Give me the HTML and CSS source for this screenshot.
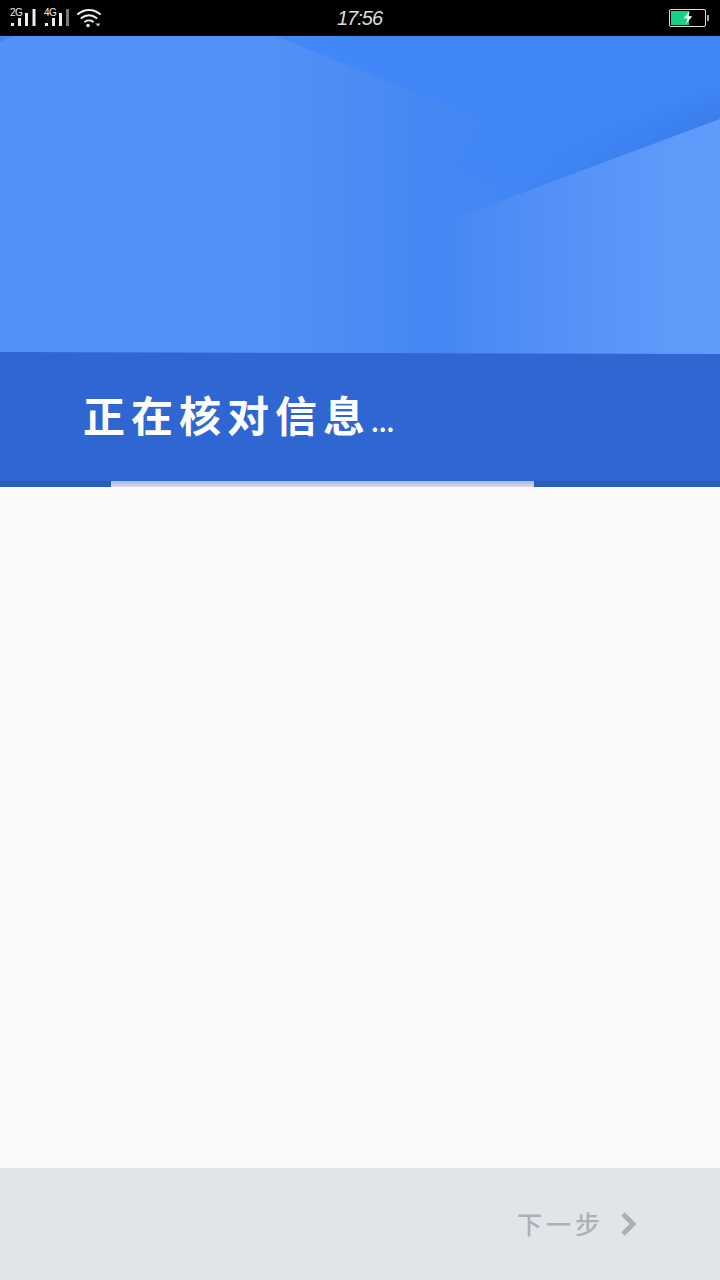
FILE: index.html
```html
<!DOCTYPE html>
<html lang="zh-CN">
<head>
    <meta charset="UTF-8">
    <meta name="viewport" content="width=device-width, initial-scale=1.0">
    <title>正在核对信息</title>
    <link rel="stylesheet" href="styles.css">
</head>
<body>
    <div class="container">
        <div class="status-bar">
            <div class="status-left">
                <div class="signal">
                    <span class="net">2G</span>
                    <svg class="bars" width="26" height="20" viewBox="0 0 26 20">
                        <rect x="1" y="15" width="3" height="3" fill="#eee"/>
                        <rect x="8" y="10" width="3" height="8" fill="#eee"/>
                        <rect x="15" y="5" width="3" height="13" fill="#eee"/>
                        <rect x="22.500" y="1" width="3" height="17" fill="#eee"/>
                    </svg>
                </div>
                <div class="signal">
                    <span class="net">4G</span>
                    <svg class="bars" width="26" height="20" viewBox="0 0 26 20">
                        <rect x="1" y="15" width="3" height="3" fill="#eee"/>
                        <rect x="8" y="10" width="3" height="8" fill="#eee"/>
                        <rect x="15" y="5" width="3" height="13" fill="#eee"/>
                        <rect x="22" y="1" width="3" height="17" fill="#777"/>
                    </svg>
                </div>
                <svg class="wifi" width="26" height="20" viewBox="0 0 26 20" fill="none" stroke="#eee" stroke-width="2" stroke-linecap="round">
                    <path d="M2 6C8.500 0.500 17.500 0.500 24 6"/>
                    <path d="M5.500 10C10 6.200 16 6.200 20.500 10"/>
                    <path d="M9 13.700C11.200 12 14.800 12 17 13.700"/>
                    <circle cx="12" cy="17.500" r="1.700" fill="#eee" stroke="none"/>
                    <path d="M19.500 15.500l2.500 3 2.500-3z" fill="#ccc" stroke="none"/>
                </svg>
            </div>
            <div class="clock">17:56</div>
            <div class="battery">
                <div class="battery-body">
                    <div class="battery-level"></div>
                    <svg class="bolt" width="10" height="13" viewBox="2 0 10 15">
                        <path d="M9 0L2 8.500h4.500L4.500 15 12 6H7.500z" fill="#fff"/>
                    </svg>
                </div>
                <div class="battery-tip"></div>
            </div>
        </div>

        <div class="hero">
            <svg class="hero-bg" width="720" height="318" viewBox="0 0 720 318">
                <defs>
                    <linearGradient id="base" gradientUnits="userSpaceOnUse" x1="260" y1="0" x2="425" y2="0">
                        <stop offset="0" stop-color="#5292f6"/>
                        <stop offset="1" stop-color="#4688f3"/>
                    </linearGradient>
                    <linearGradient id="upper" gradientUnits="userSpaceOnUse" x1="470" y1="60" x2="410" y2="180">
                        <stop offset="0" stop-color="#3f86f7"/>
                        <stop offset="1" stop-color="#3f86f7" stop-opacity="0"/>
                    </linearGradient>
                    <linearGradient id="lower" gradientUnits="userSpaceOnUse" x1="425" y1="0" x2="680" y2="0">
                        <stop offset="0" stop-color="#4688f3" stop-opacity="0"/>
                        <stop offset="0.1" stop-color="#4688f3"/>
                        <stop offset="0.55" stop-color="#5592f7"/>
                        <stop offset="1" stop-color="#5f9bfa"/>
                    </linearGradient>
                    <linearGradient id="shade" gradientUnits="userSpaceOnUse" x1="627" y1="80" x2="640" y2="113">
                        <stop offset="0" stop-color="#3878e2" stop-opacity="0"/>
                        <stop offset="1" stop-color="#3878e2"/>
                    </linearGradient>
                    <linearGradient id="shade-fade" gradientUnits="userSpaceOnUse" x1="500" y1="0" x2="720" y2="0">
                        <stop offset="0" stop-color="#000"/>
                        <stop offset="1" stop-color="#999"/>
                    </linearGradient>
                    <mask id="shade-mask" maskUnits="userSpaceOnUse" x="0" y="0" width="720" height="318">
                        <rect width="720" height="318" fill="url(#shade-fade)"/>
                    </mask>
                </defs>
                <rect width="720" height="318" fill="url(#base)"/>
                <polygon points="0,0 12,0 0,6" fill="#4285ef"/>
                <polygon points="275,0 720,0 720,83 410,199 480,82" fill="url(#upper)"/>
                <polygon points="720,83 720,46 500,131 410,199" fill="url(#shade)" mask="url(#shade-mask)"/>
                <polygon points="410,199 720,83 720,318 395,318" fill="url(#lower)"/>
            </svg>
        </div>

        <div class="band">
            <h1 class="title">正在核对信息<span class="dots">...</span></h1>
        </div>
        <div class="progress">
            <div class="progress-fill"></div>
        </div>

        <div class="content"></div>

        <div class="footer">
            <div class="next">
                <span class="next-label">下一步</span>
                <svg width="18" height="24" viewBox="0 0 18 24" fill="none" stroke="#acb0b4" stroke-width="5">
                    <path d="M3 2l10 10L3 22"/>
                </svg>
            </div>
        </div>
    </div>
</body>
</html>
```

FILE: styles.css
```css
* {
    box-sizing: border-box;
}
html, body {
    margin: 0;
    padding: 0;
}
body {
    background-color: #fafafa;
    font-family: "Noto Sans CJK SC", "Liberation Sans", sans-serif;
}
.container {
    display: flex;
    flex-direction: column;
    width: 720px;
    height: 1280px;
    overflow: hidden;
}
.status-bar {
    display: flex;
    align-items: center;
    flex: 0 0 36px;
    height: 36px;
    padding: 0 11px 0 10px;
    background-color: #000;
}
.status-left {
    display: flex;
    align-items: center;
    gap: 8px;
    flex: 0 0 327px;
}
.signal {
    position: relative;
    width: 26px;
    height: 20px;
}
.net {
    position: absolute;
    left: 0;
    top: 0;
    font-family: "Liberation Sans", sans-serif;
    font-size: 10px;
    line-height: 10px;
    letter-spacing: -0.5px;
    color: #eee;
}
.bars {
    display: block;
}
.wifi {
    margin-left: -2px;
}
.clock {
    font-family: "Liberation Sans", sans-serif;
    font-style: italic;
    font-size: 20px;
    line-height: 36px;
    letter-spacing: -1px;
    color: #ddd;
}
.battery {
    display: flex;
    align-items: center;
    gap: 1px;
    margin-left: auto;
}
.battery-body {
    position: relative;
    width: 37px;
    height: 18px;
    border: 1px solid #ddd;
    border-radius: 2px;
    padding: 1px;
}
.battery-level {
    width: 18px;
    height: 100%;
    background-color: #17cf85;
}
.bolt {
    position: absolute;
    left: 13px;
    top: 1px;
}
.battery-tip {
    width: 2px;
    height: 6px;
    background-color: #aaa;
}
.hero {
    flex: 0 0 318px;
    height: 318px;
}
.hero-bg {
    display: block;
}
.band {
    flex: 0 0 129px;
    height: 129px;
    margin-top: -2px;
    padding: 32px 0 0 83px;
    background-color: #2f66d2;
    clip-path: polygon(0 0, 100% 2px, 100% 100%, 0 100%);
}
.title {
    margin: 0;
    font-size: 42px;
    line-height: 60px;
    font-weight: 700;
    color: #fff;
    letter-spacing: 6px;
}
.dots {
    font-size: 24px;
    letter-spacing: 0;
}
.progress {
    flex: 0 0 6px;
    height: 6px;
    background-color: #2c5cb8;
    padding-left: 111px;
}
.progress-fill {
    width: 423px;
    height: 100%;
    background: linear-gradient(#aab8d8, #d4d9e6);
}
.content {
    flex: 1;
    background-color: #fafafa;
}
.footer {
    display: flex;
    align-items: center;
    justify-content: flex-end;
    flex: 0 0 112px;
    height: 112px;
    padding-right: 82px;
    background-color: #e1e5e8;
}
.next {
    display: flex;
    align-items: center;
    gap: 16px;
    font-size: 25px;
    font-weight: 500;
    color: #acb0b4;
}
.next-label {
    letter-spacing: 4px;
    padding-bottom: 3px;
}
```
